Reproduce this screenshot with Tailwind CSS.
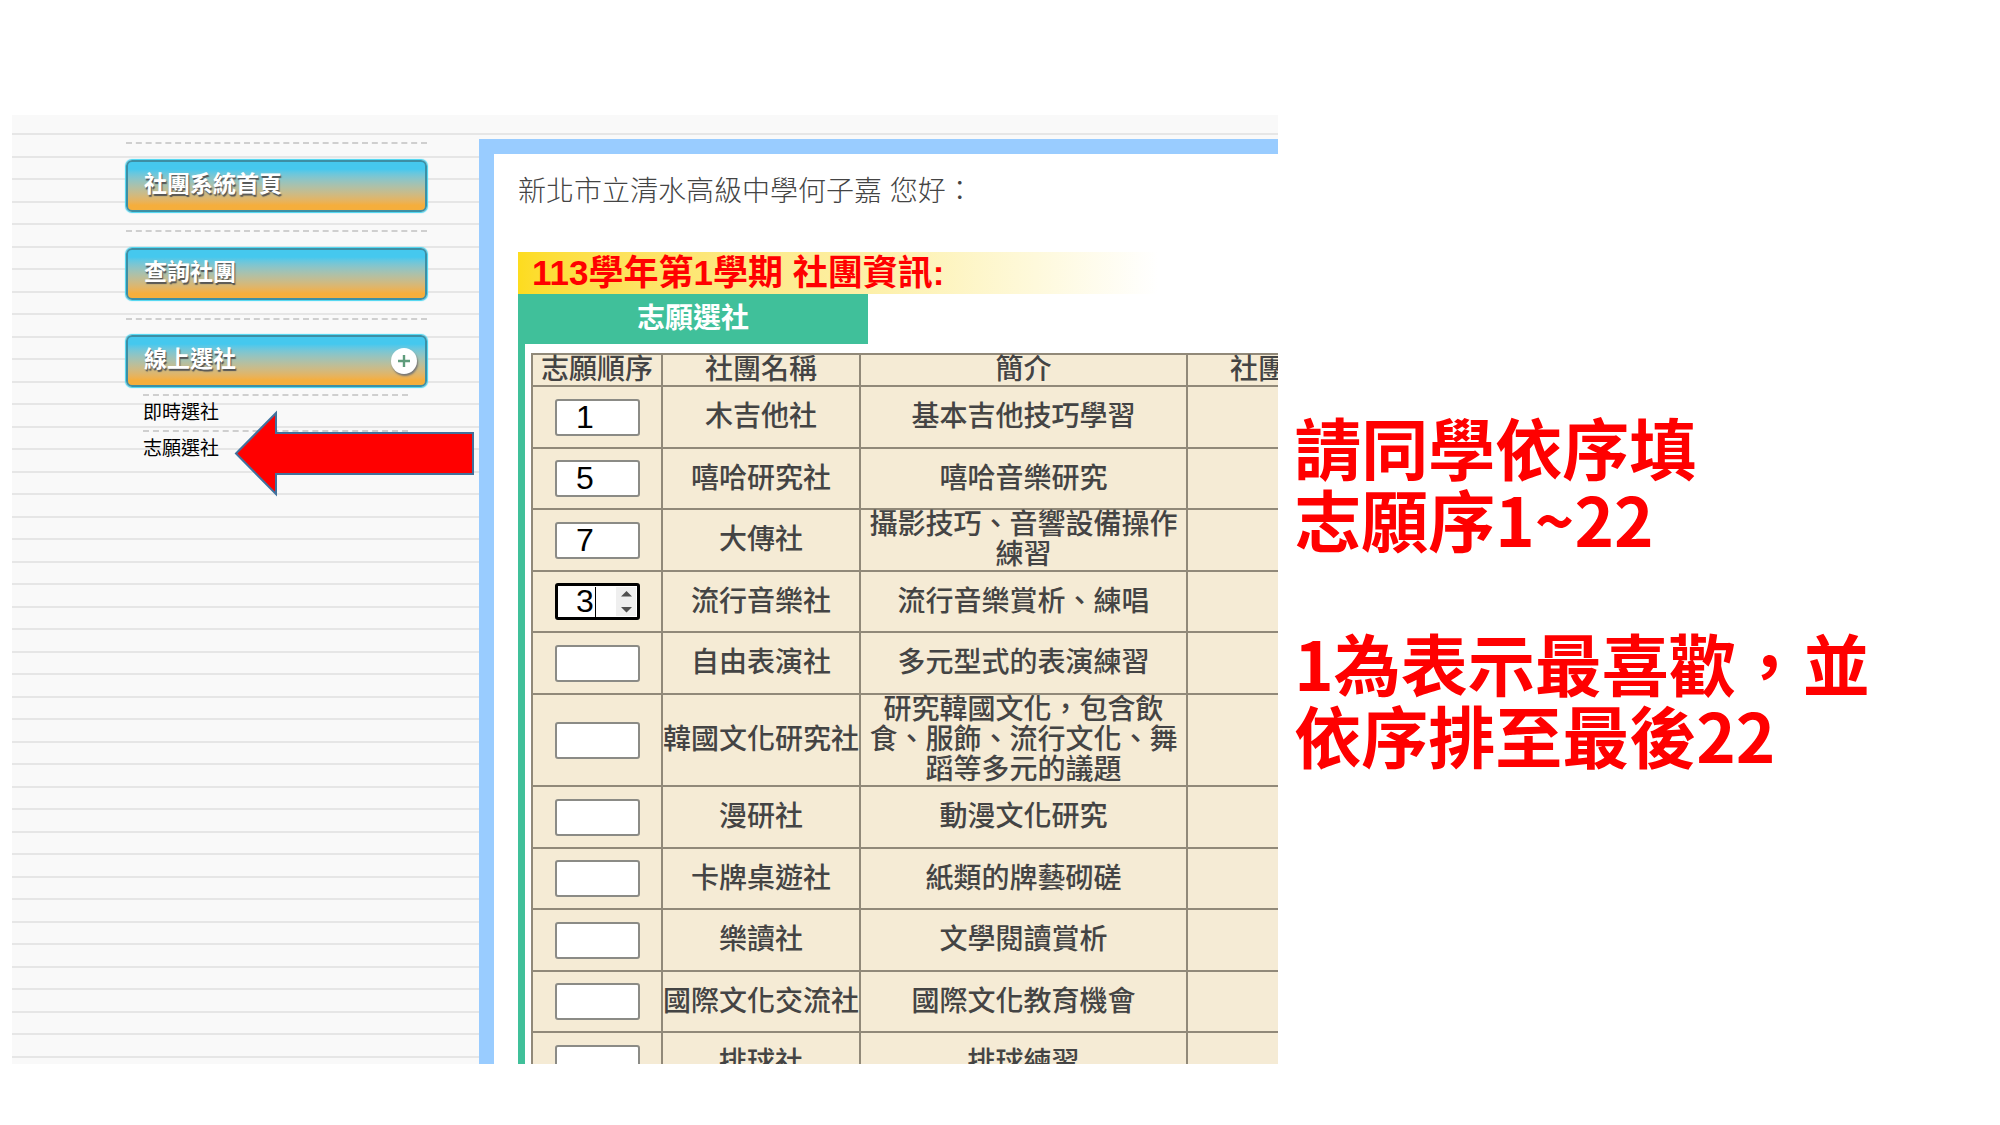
<!DOCTYPE html>
<html lang="zh-Hant-TW">
<head>
<meta charset="utf-8">
<meta name="viewport" content="width=device-width, initial-scale=1">
<title>志願選社</title>
<script src="https://cdn.jsdelivr.net/npm/@tailwindcss/browser@4"></script>
</head>
<body class="bg-white font-['Liberation_Sans','Noto_Sans_CJK_TC',sans-serif]">
<main class="flex items-start pl-3 pt-[115px]">

  <!-- Club system -->
  <section class="relative flex aspect-[1266/949] w-[63.7%] shrink-0 overflow-hidden bg-[#f9f9f9] bg-[linear-gradient(to_bottom,transparent_18px,#e6e6e6_18px,#e6e6e6_20px,transparent_20px,transparent_41px,#e6e6e6_41px,#e6e6e6_43px,transparent_43px)] bg-[length:100%_45px]">

    <nav class="flex w-[467px] shrink-0 flex-col pl-[114px] pr-[52px] pt-[27px]" aria-label="社團選單">
      <div class="border-t-2 border-dashed border-[#cfcfcf] pb-[18px] pt-4">
        <a href="#" class="flex h-[52px] items-center rounded-md border-2 border-[#3d8fa5] bg-linear-to-b from-[#45c8ee] from-15% to-[#f5ae3c] to-90% px-4 pb-1 text-[23px] font-bold text-white shadow-[0_0_1px_1px_#45d4f0] [text-shadow:1px_2px_1px_#555]">社團系統首頁</a>
      </div>
      <div class="border-t-2 border-dashed border-[#cfcfcf] pb-[18px] pt-4">
        <a href="#" class="flex h-[52px] items-center rounded-md border-2 border-[#3d8fa5] bg-linear-to-b from-[#45c8ee] from-15% to-[#f5ae3c] to-90% px-4 pb-1 text-[23px] font-bold text-white shadow-[0_0_1px_1px_#45d4f0] [text-shadow:1px_2px_1px_#555]">查詢社團</a>
      </div>
      <div class="border-t-2 border-dashed border-[#cfcfcf] pt-[15px]">
        <a href="#" class="flex h-[52px] items-center justify-between rounded-md border-2 border-[#3d8fa5] bg-linear-to-b from-[#45c8ee] from-15% to-[#f5ae3c] to-90% pl-4 pr-2 text-[23px] font-bold text-white shadow-[0_0_1px_1px_#45d4f0] [text-shadow:1px_2px_1px_#555]"><span class="pb-1">線上選社</span>
          <svg class="size-[26px] rounded-full bg-white shadow-[1px_2px_2px_#777]" viewBox="0 0 26 26" fill="none" stroke="#5f9c7c" stroke-width="2.4" aria-hidden="true"><path d="M13 7v12M7 13h12"/></svg>
        </a>
      </div>
      <ul class="ml-[17px] mr-[19px] mt-[7px] text-[19px] leading-[34px] text-black">
        <li class="border-t-2 border-dashed border-[#cfcfcf]"><a href="#">即時選社</a></li>
        <li class="border-t-2 border-dashed border-[#cfcfcf]"><a href="#">志願選社</a></li>
      </ul>
    </nav>

    <!-- Arrow pointing at the current menu entry -->
    <svg class="absolute left-[222px] top-[295px] h-[88px] w-[240px]" viewBox="0 0 240 88" aria-hidden="true"><path d="M2 43.500L42 3V23H239V64H42V84Z" fill="#f00" stroke="#41719c" stroke-width="2"/></svg>

    <article class="mt-6 flex min-w-0 grow flex-col border-l-[15px] border-t-[15px] border-[#99ccff] bg-white pl-6 pt-[18px]">
      <p class="whitespace-nowrap text-[28px] font-light leading-10 text-[#444]">新北市立清水高級中學何子嘉 您好：</p>
      <h1 class="mt-10 h-11 w-[640px] whitespace-nowrap bg-linear-to-r from-[#fddc1e] via-[#fdf0a8] via-55% to-white pl-[14px] text-[35px] font-bold leading-[42px] text-[#f00]">113學年第1學期 社團資訊:</h1>
      <h2 class="h-[50px] w-[350px] bg-[#40c09a] text-center text-[28px] font-bold leading-[50px] text-white">志願選社</h2>
      <div class="grow border-l-[7px] border-[#40c09a] pl-1.5 pt-[9px]">
        <table class="w-[852px] table-fixed border-collapse bg-[#f5ebd5] text-center text-[28px] font-medium leading-[30px] text-[#444] [&_td]:border-2 [&_td]:border-[#918979] [&_td]:p-0 [&_th]:border-2 [&_th]:border-[#918979] [&_th]:p-0 [&_th]:font-medium">
          <colgroup><col class="w-[130px]"><col class="w-[198px]"><col class="w-[327px]"><col></colgroup>
          <thead><tr class="h-8"><th scope="col">志願順序</th><th scope="col">社團名稱</th><th scope="col">簡介</th><th scope="col" class="text-left"><span class="pl-[42px]">社團</span></th></tr></thead>
          <tbody class="[&_input]:block [&_input]:mx-auto [&_input]:h-[37px] [&_input]:w-[85px] [&_input]:rounded-[3px] [&_input]:bg-white [&_input]:pr-6 [&_input]:text-center [&_input]:text-[32px] [&_input]:text-black [&_input]:outline-none [&_tr]:h-[62px] [&_tr:nth-child(even)]:h-[61px]">
            <tr><td><input class="border-2 border-[#8b8b86]" inputmode="numeric" aria-label="木吉他社 志願順序" value="1"></td><td>木吉他社</td><td>基本吉他技巧學習</td><td></td></tr>
            <tr><td><input class="border-2 border-[#8b8b86]" inputmode="numeric" aria-label="嘻哈研究社 志願順序" value="5"></td><td>嘻哈研究社</td><td>嘻哈音樂研究</td><td></td></tr>
            <tr><td><input class="border-2 border-[#8b8b86]" inputmode="numeric" aria-label="大傳社 志願順序" value="7"></td><td>大傳社</td><td>攝影技巧、音響設備操作練習</td><td></td></tr>
            <tr><td>
              <div class="relative mx-auto w-[85px]">
                <input class="border-3 border-black" inputmode="numeric" aria-label="流行音樂社 志願順序" value="3">
                <span class="absolute left-10 top-1 h-[30px] w-px bg-black"></span>
                <svg class="absolute right-1 top-1 h-[29px] w-5 bg-[#efefef]" viewBox="0 0 20 29" fill="#505050" aria-hidden="true"><path d="M5 9.500L10.500 4L16 9.500ZM5 20L10.500 25.500L16 20Z"/></svg>
              </div></td><td>流行音樂社</td><td>流行音樂賞析、練唱</td><td></td></tr>
            <tr><td><input class="border-2 border-[#8b8b86]" inputmode="numeric" aria-label="自由表演社 志願順序"></td><td>自由表演社</td><td>多元型式的表演練習</td><td></td></tr>
            <tr><td><input class="border-2 border-[#8b8b86]" inputmode="numeric" aria-label="韓國文化研究社 志願順序"></td><td>韓國文化研究社</td><td>研究韓國文化，包含飲食、服飾、流行文化、舞蹈等多元的議題</td><td></td></tr>
            <tr><td><input class="border-2 border-[#8b8b86]" inputmode="numeric" aria-label="漫研社 志願順序"></td><td>漫研社</td><td>動漫文化研究</td><td></td></tr>
            <tr><td><input class="border-2 border-[#8b8b86]" inputmode="numeric" aria-label="卡牌桌遊社 志願順序"></td><td>卡牌桌遊社</td><td>紙類的牌藝砌磋</td><td></td></tr>
            <tr><td><input class="border-2 border-[#8b8b86]" inputmode="numeric" aria-label="樂讀社 志願順序"></td><td>樂讀社</td><td>文學閱讀賞析</td><td></td></tr>
            <tr><td><input class="border-2 border-[#8b8b86]" inputmode="numeric" aria-label="國際文化交流社 志願順序"></td><td>國際文化交流社</td><td>國際文化教育機會</td><td></td></tr>
            <tr><td><input class="border-2 border-[#8b8b86]" inputmode="numeric" aria-label="排球社 志願順序"></td><td>排球社</td><td>排球練習</td><td></td></tr>
          </tbody>
        </table>
      </div>
    </article>
  </section>

  <!-- Instructions -->
  <aside class="min-w-0 grow pl-4 pt-[295px] font-['Noto_Sans_CJK_TC',sans-serif] text-[67px] font-bold leading-[72px] text-[#f00]">
    <p>請同學依序填<br>志願序1~22</p>
    <p class="mt-[72px]">1為表示最喜歡，並<br>依序排至最後22</p>
  </aside>
</main>
</body>
</html>
